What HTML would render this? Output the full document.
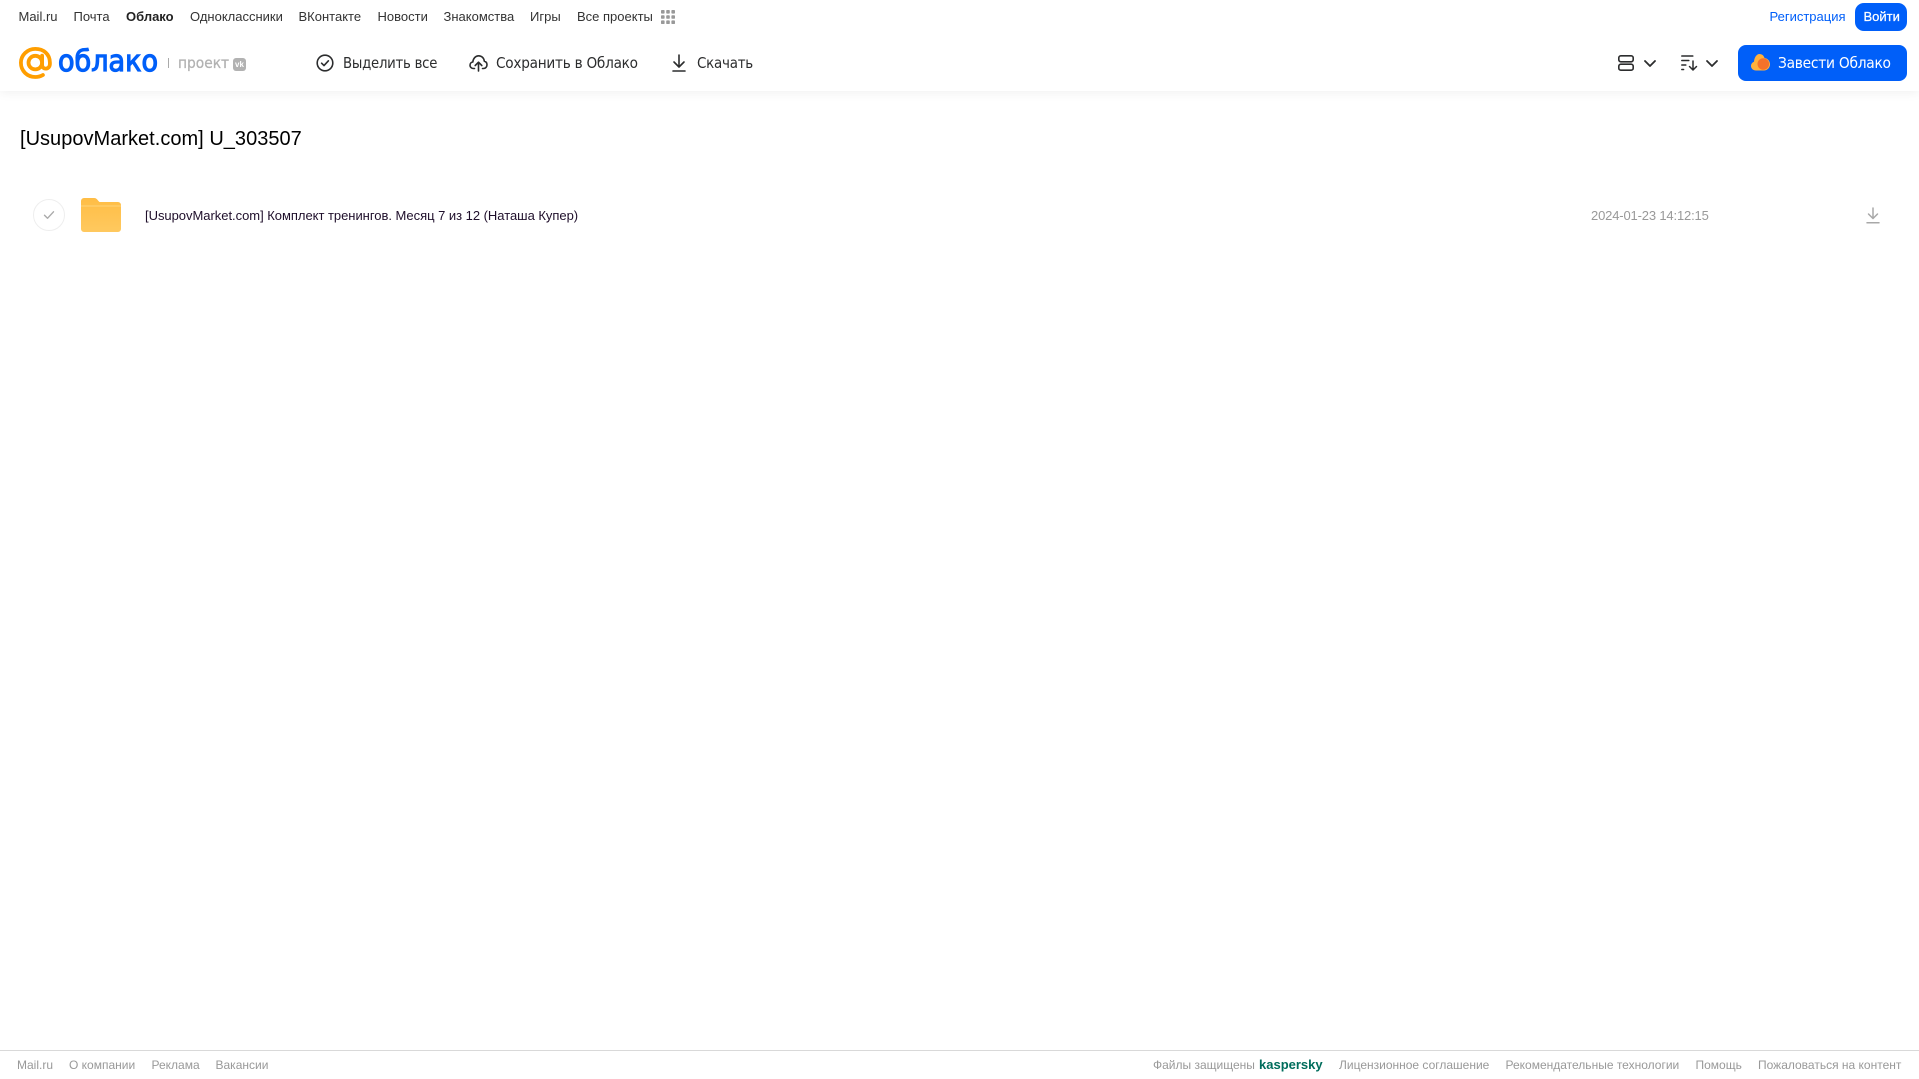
<!DOCTYPE html>
<html lang="ru">
<head>
<meta charset="utf-8">
<title>Облако</title>
<style>
html,body{margin:0;padding:0;background:#fff;}
body{position:relative;width:1919px;height:1079px;overflow:hidden;font-family:"Liberation Sans",Arial,sans-serif;}
.t{position:absolute;white-space:nowrap;line-height:16px;}
.n{font-size:13px;color:#333;top:9px;}
.h{font-size:15px;color:#2c2d2e;top:55px;font-family:"DejaVu Sans","Liberation Sans",sans-serif;letter-spacing:-.28px;transform-origin:0 50%;}
.f{font-size:12px;color:#999;top:1057px;}
svg{position:absolute;overflow:visible;}
#hdr{position:absolute;left:0;top:0;width:1919px;height:91px;background:#fff;box-shadow:0 2px 10px rgba(0,0,0,.06);}
#line{position:absolute;left:0;top:1050px;width:1919px;height:1px;background:#d9d9d9;}
.btn{position:absolute;background:#005ff9;}
</style>
</head>
<body>
<div id="hdr"></div>

<span class="t n" style="left:18.500px">Mail.ru</span>
<span class="t n" style="left:73.500px">Почта</span>
<span class="t n" style="left:126px;font-weight:bold;color:#222">Облако</span>
<span class="t n" style="left:190px">Одноклассники</span>
<span class="t n" style="left:298.500px">ВКонтакте</span>
<span class="t n" style="left:377.500px">Новости</span>
<span class="t n" style="left:443.500px">Знакомства</span>
<span class="t n" style="left:530px">Игры</span>
<span class="t n" style="left:577px">Все проекты</span>
<svg style="left:661px;top:10px" width="14" height="14" viewBox="0 0 14 14" fill="#999">
<rect x="0" y="0" width="3.6" height="3.6" rx=".8"/><rect x="5.2" y="0" width="3.6" height="3.6" rx=".8"/><rect x="10.4" y="0" width="3.6" height="3.6" rx=".8"/>
<rect x="0" y="5.2" width="3.6" height="3.6" rx=".8"/><rect x="5.2" y="5.2" width="3.6" height="3.6" rx=".8"/><rect x="10.4" y="5.2" width="3.6" height="3.6" rx=".8"/>
<rect x="0" y="10.4" width="3.6" height="3.6" rx=".8"/><rect x="5.2" y="10.4" width="3.6" height="3.6" rx=".8"/><rect x="10.4" y="10.4" width="3.6" height="3.6" rx=".8"/>
</svg>

<span class="t n" style="left:1769.500px;color:#005ff9">Регистрация</span>
<div class="btn" style="left:1855px;top:3px;width:52px;height:28px;border-radius:9px"></div>
<span class="t n" style="left:1863.500px;color:#fff;-webkit-text-stroke:.25px #fff">Войти</span>

<!-- logo -->
<svg style="left:19px;top:47px" width="33" height="32" viewBox="0 0 33 32" fill="none">
<circle cx="16.3" cy="15.6" r="6.800" stroke="#ff9e00" stroke-width="3.800"/>
<path d="M23.100 8.600v9.400c0 5 7.800 5 7.800-1.200v-1.200C30.900 7 24.500 1.900 16.300 1.900 8.600 1.900 1.900 8 1.900 15.800 1.900 24 8.300 30 16.300 30c3 0 5.400-.7 7.600-2" stroke="#ff9e00" stroke-width="3.800" stroke-linecap="round"/>
</svg>
<svg style="left:58px;top:40px" width="100" height="45">
<text x="0" y="31" font-family="'DejaVu Sans',sans-serif" font-size="29" fill="#005ff9" stroke="#005ff9" stroke-width="1.200" textLength="100" lengthAdjust="spacingAndGlyphs">облако</text>
</svg>
<div style="position:absolute;left:168px;top:58px;width:1px;height:10px;background:#aaa"></div>
<span class="t" style="left:178px;top:55px;font-size:15px;color:#b2b2b2;font-family:'DejaVu Sans',sans-serif;transform-origin:0 50%;transform:scaleX(.92);-webkit-text-stroke:.3px #b2b2b2">проект</span>
<div style="position:absolute;left:233px;top:57.500px;width:13px;height:13px;border-radius:3px;background:#b2b2b2;color:#fff;font-size:8px;font-weight:bold;line-height:13px;text-align:center">vk</div>

<!-- toolbar -->
<svg style="left:316px;top:54px" width="18" height="18" viewBox="0 0 18 18" fill="none" stroke="#2c2d2e" stroke-width="1.6">
<circle cx="9" cy="9" r="7.8"/><path d="M5.600 9.200l2.400 2.400 4.400-4.800" stroke-linecap="round" stroke-linejoin="round"/>
</svg>
<span class="t h" style="left:343px;transform:scaleX(.885)">Выделить все</span>

<svg style="left:469px;top:54px" width="19" height="18" viewBox="0 0 19 18" fill="none" stroke="#2c2d2e" stroke-width="1.6" stroke-linecap="round" stroke-linejoin="round">
<path d="M5.500 14.500H4.500C2.500 14.500 1 13 1 11.200c0-1.700 1.200-3 2.800-3.200C4.200 4.500 6.500 1.800 9.700 1.800c3 0 5.300 2.300 5.600 5.400 1.600.4 2.700 1.800 2.700 3.600 0 2-1.500 3.700-3.500 3.700h-1"/>
<path d="M9.500 17V8.500M6.200 11.500l3.300-3.300 3.300 3.300"/>
</svg>
<span class="t h" style="left:496px;transform:scaleX(.91)">Сохранить в Облако</span>

<svg style="left:671px;top:54px" width="16" height="18" viewBox="0 0 16 18" fill="none" stroke="#2c2d2e" stroke-width="1.600" stroke-linecap="round" stroke-linejoin="round">
<path d="M8 1v11.500M3 8l5 5 5-5M2 17h12"/>
</svg>
<span class="t h" style="left:697px;transform:scaleX(.897)">Скачать</span>

<svg style="left:1618px;top:55px" width="16" height="16" viewBox="0 0 16 16" fill="none" stroke="#2c2d2e" stroke-width="1.600">
<rect x=".8" y=".8" width="14.400" height="6" rx="2"/><rect x=".8" y="9.200" width="14.400" height="6" rx="2"/>
</svg>
<svg style="left:1644px;top:60px" width="12" height="7" viewBox="0 0 12 7" fill="none" stroke="#2c2d2e" stroke-width="1.800" stroke-linecap="round" stroke-linejoin="round"><path d="M1 1l5 5 5-5"/></svg>
<svg style="left:1681px;top:55px" width="16" height="16" viewBox="0 0 16 16" fill="none" stroke="#2c2d2e" stroke-width="1.500" stroke-linecap="round" stroke-linejoin="round">
<path d="M.8 1h11M.8 5.500h7M.8 10h4M.8 14.500h1.800M12 6v9M8.500 11.500l3.500 3.500 3.500-3.500"/>
</svg>
<svg style="left:1706px;top:60px" width="12" height="7" viewBox="0 0 12 7" fill="none" stroke="#2c2d2e" stroke-width="1.800" stroke-linecap="round" stroke-linejoin="round"><path d="M1 1l5 5 5-5"/></svg>

<div class="btn" style="left:1738px;top:45px;width:169px;height:36px;border-radius:8px"></div>
<svg style="left:1751px;top:54px" width="19" height="17" viewBox="0 0 19 17">
<path d="M5 16.500C2.200 16.500 0 14.500 0 12c0-2 1.300-3.500 3-4.200C3.300 3.500 5.500 0 8.500 0c2.500 0 4.500 1.800 5 4 3 .3 5.500 3 5.500 6.300 0 3.400-2.700 6.200-6 6.200z" fill="#ffb13d"/>
<circle cx="12.300" cy="10" r="5.800" fill="#f4722b"/>
</svg>
<span class="t h" style="left:1778px;color:#fff;transform:scaleX(.92)">Завести Облако</span>

<!-- title -->
<span class="t" style="left:20px;top:127px;font-size:20px;line-height:24px;color:#000;letter-spacing:.02px">[UsupovMarket.com] U_303507</span>

<!-- row -->
<div style="position:absolute;left:33px;top:199px;width:30px;height:30px;border:1px solid #eee;border-radius:50%"></div>
<svg style="left:43px;top:210px" width="12" height="10" viewBox="0 0 12 10" fill="none" stroke="#aaa" stroke-width="1.400" stroke-linecap="round" stroke-linejoin="round"><path d="M1.500 5.300l3 3 6-6.500"/></svg>
<svg style="left:81px;top:198px" width="40" height="34" viewBox="0 0 40 34">
<defs><linearGradient id="g" x1="0" y1="0" x2="0" y2="1"><stop offset="0" stop-color="#ffbd45"/><stop offset="1" stop-color="#ffc95f"/></linearGradient></defs>
<path d="M3 0h10c2 0 3 1 4 2.500L18.500 4H37a3 3 0 0 1 3 3v24a3 3 0 0 1-3 3H3a3 3 0 0 1-3-3V3a3 3 0 0 1 3-3z" fill="url(#g)"/>
<path d="M0 8h40" stroke="#ffd479" stroke-width="1"/>
</svg>
<span class="t" style="left:145px;top:208px;font-size:13px;color:#1f0f2b;letter-spacing:-.03px">[UsupovMarket.com] Комплект тренингов. Месяц 7 из 12 (Наташа Купер)</span>
<span class="t" style="left:1591px;top:208px;font-size:13px;color:#999;letter-spacing:-.16px">2024-01-23 14:12:15</span>
<svg style="left:1866px;top:207px" width="14" height="17" viewBox="0 0 14 17" fill="none" stroke="#a8a8a8" stroke-width="1.500" stroke-linecap="round" stroke-linejoin="round"><path d="M7 1v10M2.500 7L7 11.500 11.500 7M1 15.800h12"/></svg>

<!-- footer -->
<div id="line"></div>
<span class="t f" style="left:17px">Mail.ru</span>
<span class="t f" style="left:69px">О компании</span>
<span class="t f" style="left:151.500px">Реклама</span>
<span class="t f" style="left:215.500px">Вакансии</span>
<span class="t f" style="left:1153px">Файлы защищены</span>
<span class="t f" style="left:1259px;color:#006d5c;font-weight:bold;font-size:13px">kaspersky</span>
<span class="t f" style="left:1339px">Лицензионное соглашение</span>
<span class="t f" style="left:1505.500px">Рекомендательные технологии</span>
<span class="t f" style="left:1695.500px">Помощь</span>
<span class="t f" style="left:1758px">Пожаловаться на контент</span>
</body>
</html>
